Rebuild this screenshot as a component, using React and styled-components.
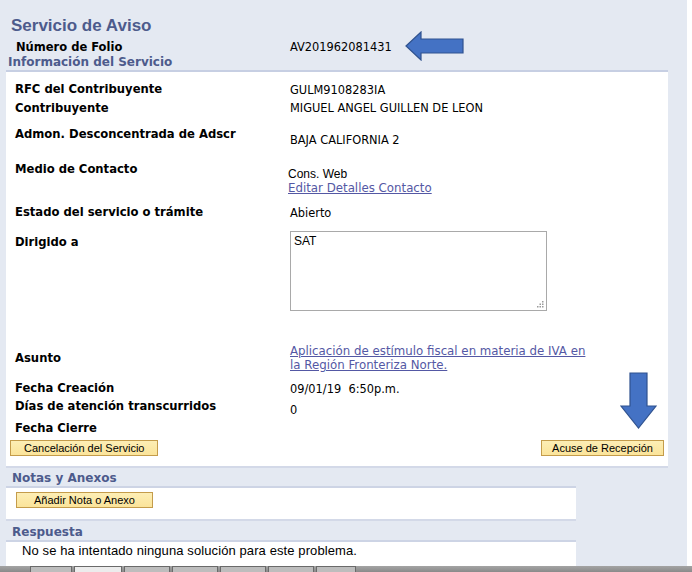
import React from "react";
import styled, { createGlobalStyle } from "styled-components";

const Global = createGlobalStyle`
  html, body { margin: 0; padding: 0; background: #ffffff; }
  body { width: 692px; height: 572px; overflow: hidden; font-family: "DejaVu Sans", Verdana, sans-serif; }
`;

const Page = styled.div`
  position: relative;
  width: 687px;
  height: 566px;
  background: #e4e9f2;
  padding-top: 16px;
  box-sizing: border-box;
  overflow: hidden;
`;

const Title = styled.h1`
  margin: 0 0 2px 11px;
  font-family: "Liberation Sans", Arial, sans-serif;
  font-size: 17px;
  line-height: 20px;
  font-weight: bold;
  color: #4d5b8c;
`;

const FolioRow = styled.div`
  display: flex;
  align-items: center;
  height: 18px;
  padding-left: 16px;
`;

const FolioLabel = styled.span`
  width: 274px;
  font-size: 11.5px;
  font-weight: bold;
  color: #000;
`;

const Value = styled.span`
  font-size: 11.4px;
  color: #000;
  line-height: 14px;
`;

const SectionTitle = styled.div`
  margin: ${(p) => p.$mt || 0}px 0 0 ${(p) => p.$ml || 12}px;
  font-size: 12px;
  line-height: 14px;
  font-weight: bold;
  color: #4d5b8c;
`;

const Panel = styled.div`
  position: relative;
  margin: 1px 0 0 6px;
  width: 662px;
  box-sizing: border-box;
  background: #ffffff;
  border-top: 2px solid #c7cfe3;
  border-bottom: 2px solid #d3d9e8;
  padding: 8px 4px 10px 9px;
`;

const Row = styled.div`
  display: flex;
  align-items: ${(p) => (p.$center ? "center" : "flex-start")};
  margin-top: ${(p) => p.$mt || 0}px;
`;

const Label = styled.div`
  width: 275px;
  flex: none;
  font-size: 11.6px;
  line-height: 18px;
  font-weight: bold;
  color: #000;
`;

const Cell = styled.div`
  padding-top: ${(p) => p.$pt || 0}px;
  font-size: 11.4px;
  line-height: ${(p) => p.$lh || 18}px;
  color: #000;
`;

const ArialCell = styled(Cell)`
  margin-left: -2px;
  font-family: "Liberation Sans", Arial, sans-serif;
  font-size: 12px;
`;

const Link = styled.a`
  display: block;
  margin-left: ${(p) => p.$ml || 0}px;
  font-size: 11.8px;
  line-height: 14px;
  color: #5458a4;
  text-decoration: underline;
  cursor: pointer;
`;

const AreaWrap = styled.div`
  position: relative;
  width: 257px;
  height: 80px;
  margin-top: -2px;
`;

const TextArea = styled.textarea`
  display: block;
  width: 100%;
  height: 100%;
  box-sizing: border-box;
  margin: 0;
  border: 1px solid #a9a9a9;
  padding: 2px 3px;
  font-family: "Liberation Sans", Arial, sans-serif;
  font-size: 12px;
  color: #000;
  resize: none;
  outline: none;
`;

const Grip = styled.svg`
  position: absolute;
  right: 3px;
  bottom: 3px;
`;

const ButtonRow = styled.div`
  display: flex;
  justify-content: space-between;
  margin: 3px 0 0 -5px;
`;

const Btn = styled.button`
  height: 16px;
  box-sizing: border-box;
  padding: 0 ${(p) => p.$px || 10}px;
  background: linear-gradient(#fdeeb5, #fbe49a);
  border: 1px solid #c49c4b;
  font-family: "Liberation Sans", Arial, sans-serif;
  font-size: 11px;
  line-height: 14px;
  color: #000;
  cursor: pointer;
`;

const SubBox = styled.div`
  display: flex;
  align-items: flex-start;
  margin: ${(p) => p.$mt || 1}px 0 0 6px;
  width: 570px;
  height: ${(p) => p.$h}px;
  box-sizing: border-box;
  background: #ffffff;
  border-top: 2px solid #cdd4e5;
  border-bottom: ${(p) => (p.$bb ? "2px solid #d3d9e8" : "none")};
  padding: ${(p) => p.$pad};
`;

const Message = styled.div`
  font-family: "Liberation Sans", Arial, sans-serif;
  font-size: 13px;
  letter-spacing: 0.1px;
  line-height: 14px;
  color: #000;
`;

const Overlay = styled.svg`
  position: absolute;
  left: ${(p) => p.$x}px;
  top: ${(p) => p.$y}px;
`;

const Taskbar = styled.div`
  display: flex;
  height: 6px;
  background: linear-gradient(#a4a4a4, #8a8a8a);
  padding-left: 30px;
  gap: 2px;
`;

const Tab = styled.div`
  width: ${(p) => p.$w}px;
  height: 6px;
  box-sizing: border-box;
  border: 1px solid #6a6a6a;
  border-bottom: none;
  background: ${(p) => (p.$active ? "#ececec" : "#bdbdbd")};
`;

function LeftArrow() {
  return (
    <Overlay $x={405} $y={31} width="60" height="30" viewBox="0 0 60 30">
      <polygon
        points="1,15 16,1 16,8 58,8 58,22 16,22 16,29"
        fill="#4472c4"
        stroke="#2f528f"
        strokeWidth="1.2"
      />
    </Overlay>
  );
}

function DownArrow() {
  return (
    <Overlay $x={614} $y={300} width="37" height="57" viewBox="0 0 37 57">
      <polygon
        points="10,1 27,1 27,34 36,34 18.5,56 1,34 10,34"
        fill="#4472c4"
        stroke="#2f528f"
        strokeWidth="1.2"
      />
    </Overlay>
  );
}

function ResizeGrip() {
  return (
    <Grip width="7" height="7" viewBox="0 0 7 7">
      <g fill="#9a9a9a">
        <rect x="5" y="0" width="1.5" height="1.5" />
        <rect x="2.5" y="2.5" width="1.5" height="1.5" />
        <rect x="5" y="2.5" width="1.5" height="1.5" />
        <rect x="0" y="5" width="1.5" height="1.5" />
        <rect x="2.5" y="5" width="1.5" height="1.5" />
        <rect x="5" y="5" width="1.5" height="1.5" />
      </g>
    </Grip>
  );
}

export default function App() {
  return (
    <>
      <Global />
      <Page>
        <Title>Servicio de Aviso</Title>
        <FolioRow>
          <FolioLabel>Número de Folio</FolioLabel>
          <Value>AV201962081431</Value>
        </FolioRow>
        <LeftArrow />
        <SectionTitle $ml={8} $mt={-1}>Información del Servicio</SectionTitle>
        <Panel>
          <Row>
            <Label>RFC del Contribuyente</Label>
            <Cell $pt={1}>GULM9108283IA</Cell>
          </Row>
          <Row>
            <Label>Contribuyente</Label>
            <Cell>MIGUEL ANGEL GUILLEN DE LEON</Cell>
          </Row>
          <Row $mt={8}>
            <Label>Admon. Desconcentrada de Adscr</Label>
            <Cell $pt={6}>BAJA CALIFORNIA 2</Cell>
          </Row>
          <Row $mt={11}>
            <Label>Medio de Contacto</Label>
            <div>
              <ArialCell $pt={7} $lh={14}>Cons. Web</ArialCell>
              <Link $ml={-2}>Editar Detalles Contacto</Link>
            </div>
          </Row>
          <Row $mt={8}>
            <Label>Estado del servicio o trámite</Label>
            <Cell $pt={1}>Abierto</Cell>
          </Row>
          <Row $mt={11}>
            <Label>Dirigido a</Label>
            <AreaWrap>
              <TextArea readOnly defaultValue="SAT" />
              <ResizeGrip />
            </AreaWrap>
          </Row>
          <Row $mt={33} $center>
            <Label>Asunto</Label>
            <div>
              <Link>Aplicación de estímulo fiscal en materia de IVA en</Link>
              <Link>la Región Fronteriza Norte.</Link>
            </div>
          </Row>
          <Row $mt={7}>
            <Label>Fecha Creación</Label>
            <Cell $pt={2} $lh={16}>09/01/19&nbsp;&nbsp;6:50p.m.</Cell>
          </Row>
          <Row>
            <Label>Días de atención transcurridos</Label>
            <Cell $pt={5} $lh={17}>0</Cell>
          </Row>
          <Row>
            <Label>Fecha Cierre</Label>
          </Row>
          <ButtonRow>
            <Btn $px={13}>Cancelación del Servicio</Btn>
            <Btn $px={10}>Acuse de Recepción</Btn>
          </ButtonRow>
          <DownArrow />
        </Panel>
        <SectionTitle $mt={3}>Notas y Anexos</SectionTitle>
        <SubBox $mt={1} $h={35} $pad="4px 0 0 10px" $bb>
          <Btn $px={17}>Añadir Nota o Anexo</Btn>
        </SubBox>
        <SectionTitle $mt={4}>Respuesta</SectionTitle>
        <SubBox $mt={1} $h={28} $pad="2px 0 0 16px">
          <Message>No se ha intentado ninguna solución para este problema.</Message>
        </SubBox>
      </Page>
      <Taskbar>
        <Tab $w={42} />
        <Tab $w={48} $active />
        <Tab $w={46} />
        <Tab $w={46} />
        <Tab $w={46} />
        <Tab $w={46} />
        <Tab $w={40} />
      </Taskbar>
    </>
  );
}
